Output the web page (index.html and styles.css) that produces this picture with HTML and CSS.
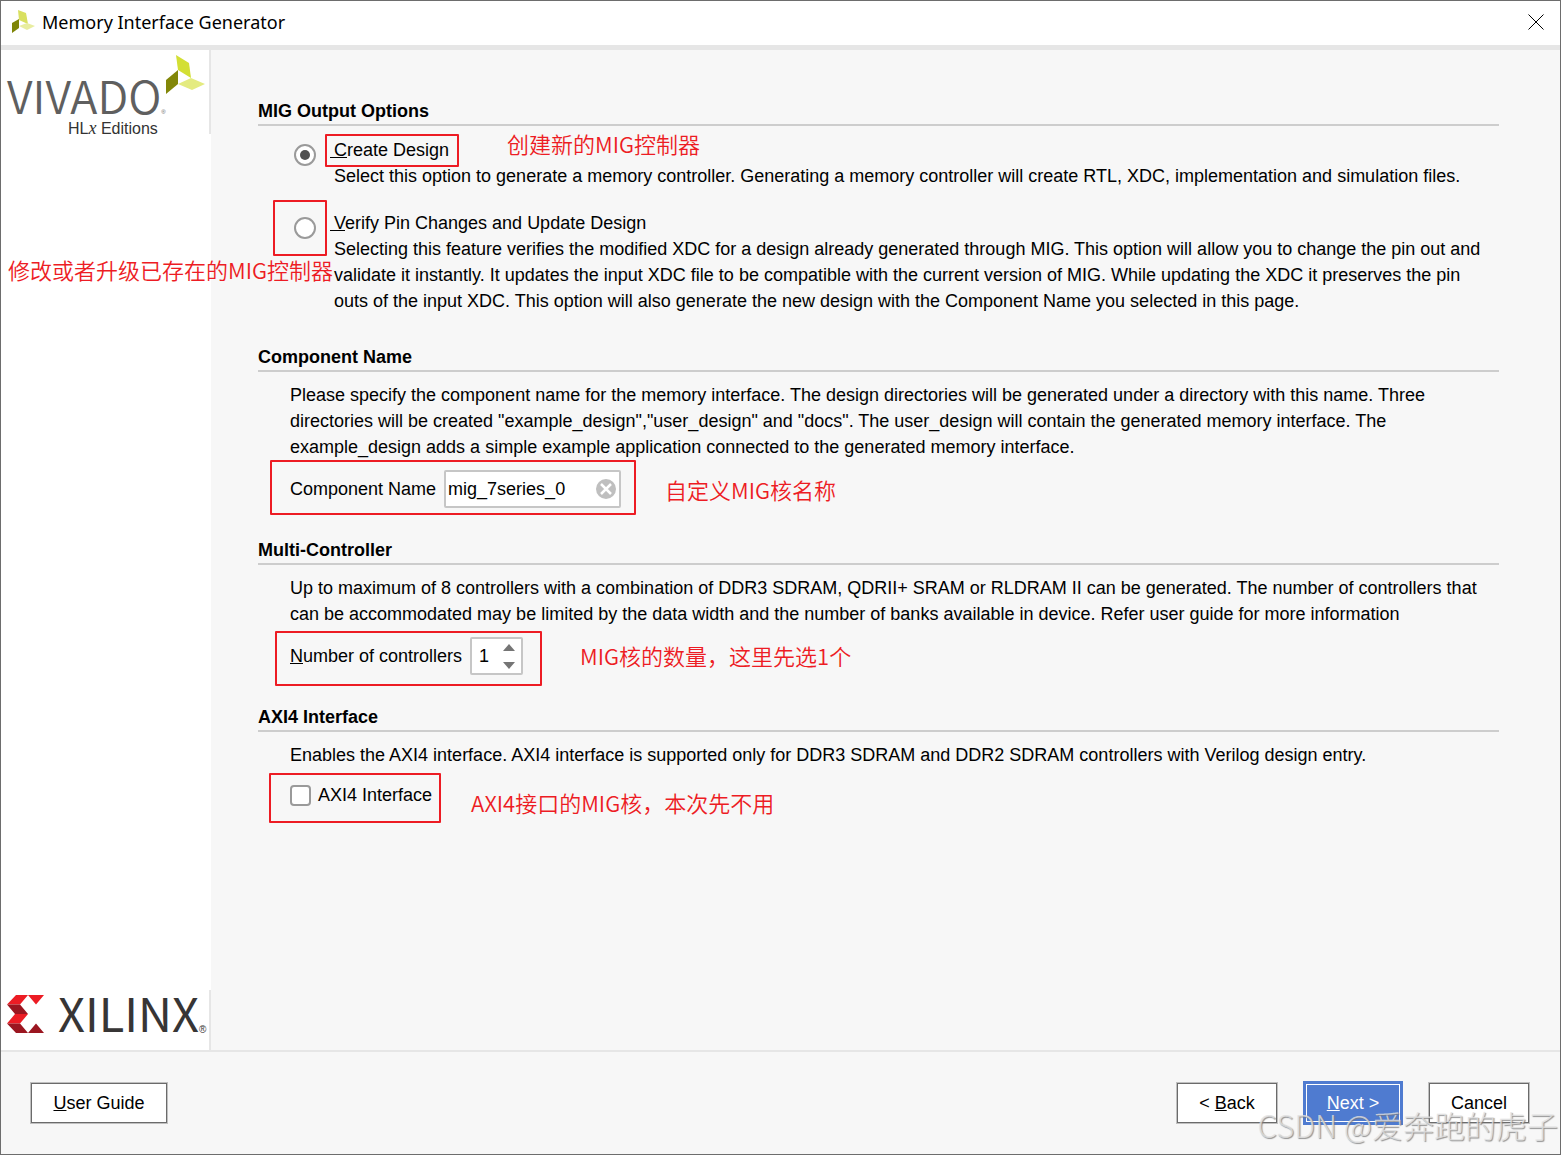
FILE: index.html
```html
<!DOCTYPE html>
<html lang="en">
<head>
<meta charset="utf-8">
<title>Memory Interface Generator</title>
<link rel="stylesheet" href="styles.css">
</head>
<body>
<div class="window">
  <header class="titlebar">
    <svg class="titlebar-icon" viewBox="0 0 24 24" aria-hidden="true">
      <path fill="#d9e060" d="M7 0l8 3 2 11-9-4z"/>
      <path fill="#7f8507" d="M1 13l7-4v9l-7 5z"/>
      <path fill="#e8eda0" d="M8 16l8-3 8 3-8 4z"/>
    </svg>
    <h1 class="titlebar-text">Memory Interface Generator</h1>
    <button class="titlebar-close" type="button" aria-label="Close">
      <svg viewBox="0 0 16 16"><path d="M.5 .5l15 15M15.500 .5l-15 15" fill="none" stroke="#000" stroke-width="1"/></svg>
    </button>
  </header>

  <div class="workspace">
    <aside class="sidebar">
      <div class="brand brand-vivado">
        <span class="vivado-name">VIVADO<span class="vivado-dot">®</span></span>
        <svg class="vivado-mark" viewBox="0 0 39 40" aria-hidden="true">
          <path fill="#d3df34" d="M10 0l13 8 2 15-13-8z"/>
          <path fill="#828708" d="M0 25l12-10v14L0 39z"/>
          <path fill="#e4eb80" d="M12 29l13-6 14 6-13 6z"/>
        </svg>
        <span class="vivado-edition">HL<i class="vivado-x">x</i> Editions</span>
      </div>
      <div class="brand brand-xilinx">
        <svg class="xilinx-mark" viewBox="0 0 37 38" aria-hidden="true">
          <path fill="#ec1c24" d="M9 0h12l-8 9.500H0zM21 0h16l-8 9.500zM8 19h13l-8 9.500H0z"/>
          <path fill="#9b1620" d="M0 9.500h13L21 19H8zM0 28.500h13L21 38H9zM29 28.500L37 38H21z"/>
        </svg>
        <span class="xilinx-name">XILINX</span><span class="xilinx-reg">®</span>
      </div>
    </aside>

    <main class="content">
      <section class="section">
        <h2 class="section-title">MIG Output Options</h2>
        <div class="section-body options">
          <div class="option">
            <input class="radio" type="radio" name="output" id="create" checked>
            <div class="option-text">
              <label for="create"><span class="mnemonic-wide">C</span>reate Design</label>
              <p class="text">Select this option to generate a memory controller. Generating a memory controller will create RTL, XDC, implementation and simulation files.</p>
            </div>
          </div>
          <div class="option">
            <input class="radio" type="radio" name="output" id="verify">
            <div class="option-text">
              <label for="verify"><span class="mnemonic-wide">V</span>erify Pin Changes and Update Design</label>
              <p class="text">Selecting this feature verifies the modified XDC for a design already generated through MIG. This option will allow you to change the pin out and validate it instantly. It updates the input XDC file to be compatible with the current version of MIG. While updating the XDC it preserves the pin outs of the input XDC. This option will also generate the new design with the Component Name you selected in this page.</p>
            </div>
          </div>
          <span class="box box-create"></span>
          <span class="box box-verify"></span>
          <span class="note note-create" lang="zh">创建新的MIG控制器</span>
          <span class="note note-verify" lang="zh">修改或者升级已存在的MIG控制器</span>
        </div>
      </section>

      <section class="section">
        <h2 class="section-title">Component Name</h2>
        <div class="section-body">
          <p class="text">Please specify the component name for the memory interface. The design directories will be generated under a directory with this name. Three directories will be created "example_design","user_design" and "docs". The user_design will contain the generated memory interface. The example_design adds a simple example application connected to the generated memory interface.</p>
          <div class="field">
            <label for="component">Component Name</label>
            <div class="control control-name">
              <input class="control-input" type="text" id="component" value="mig_7series_0">
              <button class="clear" type="button" aria-label="Clear">
                <svg viewBox="0 0 20 20"><circle cx="10" cy="10" r="10" fill="#bfbfbf"/><path d="M5 5l10 10M15 5L5 15" stroke="#fff" stroke-width="2.500" fill="none"/></svg>
              </button>
            </div>
          </div>
          <span class="box box-name"></span>
          <span class="note note-name" lang="zh">自定义MIG核名称</span>
        </div>
      </section>

      <section class="section">
        <h2 class="section-title">Multi-Controller</h2>
        <div class="section-body">
          <p class="text">Up to maximum of 8 controllers with a combination of DDR3 SDRAM, QDRII+ SRAM or RLDRAM II can be generated. The number of controllers that can be accommodated may be limited by the data width and the number of banks available in device. Refer user guide for more information</p>
          <div class="field">
            <label for="count"><u>N</u>umber of controllers</label>
            <div class="control control-count">
              <input class="control-input count-input" type="number" id="count" min="1" max="8" value="1">
              <div class="spin">
                <button type="button" aria-label="Increase"><svg viewBox="0 0 12 7"><path d="M0 7l6-7 6 7z" fill="#757575"/></svg></button>
                <button type="button" aria-label="Decrease"><svg viewBox="0 0 12 7"><path d="M0 0l6 7 6-7z" fill="#757575"/></svg></button>
              </div>
            </div>
          </div>
          <span class="box box-count"></span>
          <span class="note note-count" lang="zh">MIG核的数量，这里先选1个</span>
        </div>
      </section>

      <section class="section">
        <h2 class="section-title">AXI4 Interface</h2>
        <div class="section-body">
          <p class="text">Enables the AXI4 interface. AXI4 interface is supported only for DDR3 SDRAM and DDR2 SDRAM controllers with Verilog design entry.</p>
          <div class="check">
            <input class="checkbox" type="checkbox" id="axi">
            <label for="axi">AXI4 Interface</label>
          </div>
          <span class="box box-axi"></span>
          <span class="note note-axi" lang="zh">AXI4接口的MIG核，本次先不用</span>
        </div>
      </section>
    </main>
  </div>

  <footer class="footer">
    <button class="button button-guide" type="button"><u>U</u>ser Guide</button>
    <div class="footer-actions">
      <button class="button" type="button">&lt; <u>B</u>ack</button>
      <button class="button button-primary" type="button"><u>N</u>ext &gt;</button>
      <button class="button" type="button">Cancel</button>
    </div>
    <span class="watermark" lang="zh">CSDN @爱奔跑的虎子</span>
  </footer>
</div>
</body>
</html>
```

FILE: styles.css
```css
* {
  box-sizing: border-box;
}

body {
  margin: 0;
  font-family: "Liberation Sans", Arial, sans-serif;
  font-size: 18px;
  line-height: 26px;
  color: #000;
}

button,
input {
  margin: 0;
  padding: 0;
  border: 0;
  background: none;
  font: inherit;
  color: inherit;
}

svg {
  display: block;
}

u {
  text-decoration-thickness: 1px;
  text-underline-offset: 1px;
  text-decoration-skip-ink: none;
}

.window {
  display: flex;
  flex-direction: column;
  min-height: 100vh;
  border: 1px solid #6d6d6d;
  background: #f7f7f7;
}

/* Title bar */
.titlebar {
  display: flex;
  align-items: center;
  height: 49px;
  padding: 0 16px 2px 10px;
  border-bottom: 5px solid #e6e6e6;
  background: #fff;
}

.titlebar-icon {
  width: 24px;
  height: 24px;
}

.titlebar-text {
  flex: 1;
  margin: 0 0 0 7px;
  font-family: "Noto Sans", "Open Sans", sans-serif;
  font-size: 18px;
  font-weight: 400;
}

.titlebar-close svg {
  width: 16px;
  height: 16px;
}

/* Sidebar */
.workspace {
  display: flex;
  flex: 1;
}

.sidebar {
  display: flex;
  flex-direction: column;
  justify-content: space-between;
  flex: none;
  width: 210px;
  background: #fff;
}

.brand {
  position: relative;
  border-right: 2px solid #e6e6e6;
  font-family: "Noto Sans CJK SC", sans-serif;
  font-weight: 350;
  white-space: nowrap;
}

.brand-vivado {
  height: 84px;
  padding-top: 22px;
  padding-left: 6px;
}

.vivado-name {
  display: block;
  font-size: 45px;
  line-height: 45px;
  color: #5f5f5f;
}

.vivado-dot {
  font-family: "Liberation Sans", Arial, sans-serif;
  font-size: 6px;
}

.vivado-mark {
  position: absolute;
  top: 5px;
  right: 4px;
  width: 39px;
  height: 40px;
}

.vivado-edition {
  position: absolute;
  left: 67px;
  top: 68px;
  font-family: "Liberation Sans", Arial, sans-serif;
  font-size: 16px;
  line-height: 20px;
  color: #333;
}

.vivado-x {
  font-family: "Liberation Serif", serif;
  font-size: 18px;
}

.brand-xilinx {
  display: flex;
  height: 60px;
  padding: 5px 0 0 6px;
  color: #373535;
}

.xilinx-mark {
  flex: none;
  width: 37px;
  height: 38px;
}

.xilinx-name {
  margin-left: 14px;
  font-size: 47px;
  font-weight: 400;
  line-height: 34px;
}

.xilinx-reg {
  align-self: flex-end;
  padding-bottom: 10px;
  font-family: "Liberation Sans", Arial, sans-serif;
  font-size: 10px;
  line-height: 20px;
}

/* Content */
.content {
  flex: 1;
  padding: 48px 61px 48px 47px;
}

.section + .section {
  margin-top: 29px;
}

.section-title {
  margin: 0;
  border-bottom: 2px solid #cdcdcd;
  font-size: 18px;
  font-weight: 700;
}

.section-body {
  position: relative;
  padding: 10px 10px 0 32px;
}

.options {
  display: flex;
  flex-direction: column;
  gap: 21px;
  padding-top: 11px;
  padding-bottom: 1px;
}

.option {
  display: flex;
  gap: 18px;
  padding-left: 4px;
}

.radio {
  display: grid;
  place-items: center;
  flex: none;
  width: 22px;
  height: 22px;
  margin-top: 7px;
  border: 2px solid #9a9a9a;
  border-radius: 50%;
  background: #fff;
  appearance: none;
}

.radio:checked::before {
  content: "";
  width: 10px;
  height: 10px;
  border-radius: 50%;
  background: #4f4f4f;
}

.option-text label {
  display: block;
}

.mnemonic-wide {
  margin-left: -4px;
  padding-left: 4px;
  background: linear-gradient(#000, #000) 0 17px / 100% 1px no-repeat;
}

.text {
  margin: 0;
}

.field {
  display: flex;
  align-items: center;
  gap: 8px;
  margin-top: 10px;
}

.control {
  display: flex;
  align-items: center;
  height: 38px;
  border: 2px solid #c6c6c6;
  border-radius: 2px;
  background: #fff;
}

.control-name {
  width: 177px;
  padding: 0 3px 0 2px;
}

.control-input {
  flex: 1;
  min-width: 0;
  outline: 0;
}

.clear svg {
  width: 20px;
  height: 20px;
}

.control-count {
  width: 53px;
  padding: 0 6px 0 7px;
}

.count-input {
  appearance: textfield;
}

.count-input::-webkit-inner-spin-button {
  display: none;
}

.spin {
  display: flex;
  flex-direction: column;
  gap: 11px;
}

.spin svg {
  width: 12px;
  height: 7px;
}

.spin button {
  line-height: 0;
}

.check {
  display: flex;
  align-items: center;
  gap: 7px;
  margin-top: 14px;
}

.checkbox {
  width: 21px;
  height: 21px;
  border: 2px solid #9a9a9a;
  border-radius: 4px;
  background: #fff;
  appearance: none;
}

/* Red annotations over the form */
.box {
  position: absolute;
  border: 2px solid #ed1c24;
  border-radius: 1px;
  pointer-events: none;
}

.note {
  position: absolute;
  font-family: "Noto Sans CJK SC", sans-serif;
  font-size: 22px;
  font-weight: 350;
  color: #ed1c24;
  white-space: nowrap;
  pointer-events: none;
}

.box-create { left: 67px; top: 8px; width: 134px; height: 33px; }
.box-verify { left: 15px; top: 74px; width: 54px; height: 56px; }
.box-name { left: 12px; top: 88px; width: 366px; height: 55px; }
.box-count { left: 17px; top: 66px; width: 267px; height: 55px; }
.box-axi { left: 11px; top: 41px; width: 172px; height: 50px; }

.note-create { left: 249px; top: 4px; }
.note-verify { left: -250px; top: 130px; }
.note-name { left: 407px; top: 104px; }
.note-count { left: 322px; top: 77px; }
.note-axi { left: 213px; top: 57px; }

/* Footer */
.footer {
  position: relative;
  display: flex;
  align-items: center;
  justify-content: space-between;
  height: 104px;
  padding: 0 31px 0 30px;
  border-top: 2px solid #e6e6e6;
}

.footer-actions {
  display: flex;
  align-items: center;
  gap: 26px;
}

.button {
  width: 100px;
  height: 40px;
  border: 1px solid #6b6b6b;
  box-shadow: 0 0 0 1px #c0c0c0;
  background: #fff;
}

.button-guide {
  width: 136px;
}

.button-primary {
  height: 44px;
  border: 3px solid #4f7bd0;
  box-shadow: inset 0 0 0 1px #fff;
  background: #4f7bd0;
  color: #fff;
}

.watermark {
  position: absolute;
  right: 2px;
  bottom: 9px;
  font-family: "Noto Sans CJK SC", sans-serif;
  font-size: 31px;
  font-weight: 300;
  line-height: 40px;
  color: rgba(225, 225, 225, 0.8);
  text-shadow: 1px 1px 1px rgba(120, 120, 120, 0.8);
  white-space: nowrap;
  pointer-events: none;
}
```
